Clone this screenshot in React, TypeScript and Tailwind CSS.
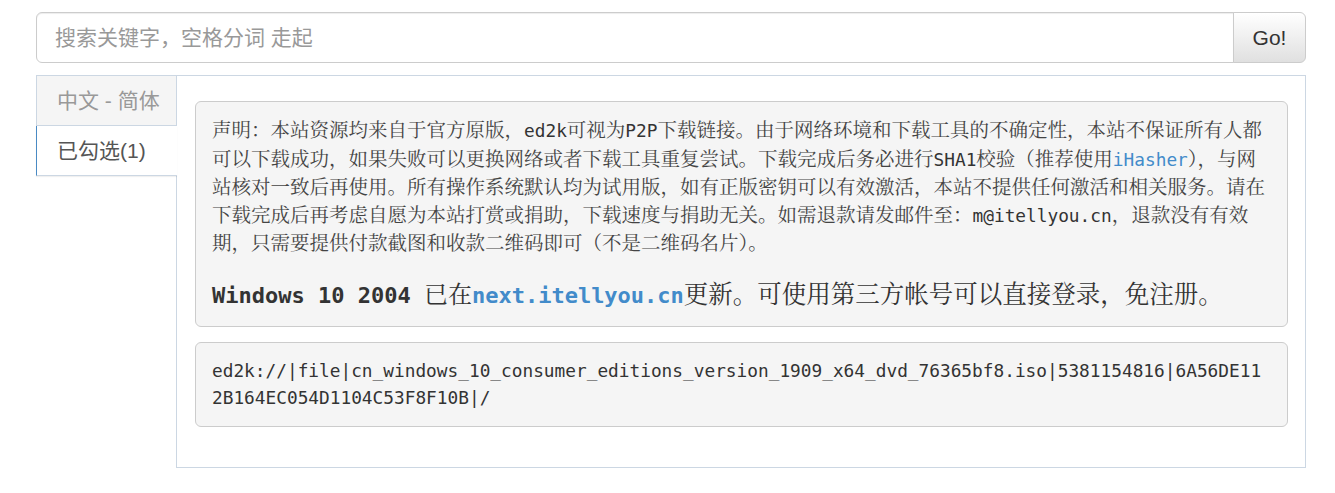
import React from 'react';

const cjkSerif = "font-['Noto_Serif_CJK_SC','Noto_Sans_CJK_SC',serif]";
const sans = "font-['Liberation_Sans','Noto_Sans_CJK_SC',sans-serif]";

function M({ children }: { children: React.ReactNode }) {
  return <span className="font-['DejaVu_Sans_Mono',monospace] text-[17.8px] text-[#333]">{children}</span>;
}

function A({ children, big }: { children: React.ReactNode; big?: boolean }) {
  return (
    <span
      className={
        big
          ? "font-['DejaVu_Sans_Mono',monospace] text-[22px] font-bold text-[#428bca]"
          : "font-['DejaVu_Sans_Mono',monospace] text-[17.8px] text-[#428bca]"
      }
    >
      {children}
    </span>
  );
}

export default function App() {
  return (
    <div className="w-[1335px] h-[493px] bg-white pt-[12px]">
      <div className="ml-[36px] w-[1270px]">
        {/* search */}
        <div className="flex h-[51px]">
          <input
            className={`flex-1 min-w-0 border border-[#ccc] rounded-l-[6px] px-[18px] text-[21px] text-[#555] placeholder:text-[#999] outline-none shadow-[inset_0_1px_1px_rgba(0,0,0,0.075)] ${sans}`}
            placeholder="搜索关键字，空格分词 走起"
          />
          <button
            className={`w-[73px] -ml-px border border-[#ccc] rounded-r-[6px] bg-gradient-to-b from-white to-[#e0e0e0] text-[21px] text-[#333] ${sans}`}
          >
            Go!
          </button>
        </div>

        {/* tabs + panel */}
        <div className="flex mt-[12px]">
          <div className={`w-[141px] -mr-px relative z-10 flex flex-col ${sans}`}>
            <div className="h-[51px] border border-[#ccd7e3] bg-[#f5f5f5] flex items-center pl-[20px] text-[21px] text-[#999]">
              中文 - 简体
            </div>
            <div className="h-[50px] border-l border-l-[#4a8ac4] border-b border-b-[#ccd7e3] bg-white flex items-center pl-[20px] text-[21px] text-[#555] shadow-[0_1px_1px_rgba(0,0,0,0.06)]">
              已勾选(1)
            </div>
          </div>
          <div className="flex-1 h-[393px] border border-[#ccd7e3] pt-[25px] pl-[18px] pr-[17px]">
            <div
              className={`border border-[#ccc] rounded-[6px] bg-[#f5f5f5] px-[16px] pt-[14px] pb-[14px] text-[19.5px] leading-[27.5px] text-[#444] whitespace-nowrap ${cjkSerif}`}
            >
              <div>
                声明：本站资源均来自于官方原版，<M>ed2k</M>可视为<M>P2P</M>下载链接。由于网络环境和下载工具的不确定性，本站不保证所有人都
              </div>
              <div>
                可以下载成功，如果失败可以更换网络或者下载工具重复尝试。下载完成后务必进行<M>SHA1</M>校验（推荐使用<A>iHasher</A>），与网
              </div>
              <div>
                站核对一致后再使用。所有操作系统默认均为试用版，如有正版密钥可以有效激活，本站不提供任何激活和相关服务。请在
              </div>
              <div>
                下载完成后再考虑自愿为本站打赏或捐助，下载速度与捐助无关。如需退款请发邮件至：<M>m@itellyou.cn</M>，退款没有有效
              </div>
              <div>期，只需要提供付款截图和收款二维码即可（不是二维码名片）。</div>
              <div className="mt-[20px] text-[24px] leading-[32px] font-bold text-[#333]">
                <span className="font-['DejaVu_Sans_Mono',monospace] text-[22px]">Windows 10 2004 </span>
                <span className="font-normal">已在</span>
                <A big>next.itellyou.cn</A>
                <span className="font-normal text-[24.5px]">更新。可使用第三方帐号可以直接登录，免注册。</span>
              </div>
            </div>
            <div className="mt-[15px] border border-[#ccc] rounded-[6px] bg-[#f5f5f5] px-[16px] py-[14px] font-['DejaVu_Sans_Mono',monospace] text-[17.8px] leading-[27.8px] text-[#333] whitespace-nowrap">
              <div>ed2k://|file|cn_windows_10_consumer_editions_version_1909_x64_dvd_76365bf8.iso|5381154816|6A56DE11</div>
              <div>2B164EC054D1104C53F8F10B|/</div>
            </div>
          </div>
        </div>
      </div>
    </div>
  );
}
